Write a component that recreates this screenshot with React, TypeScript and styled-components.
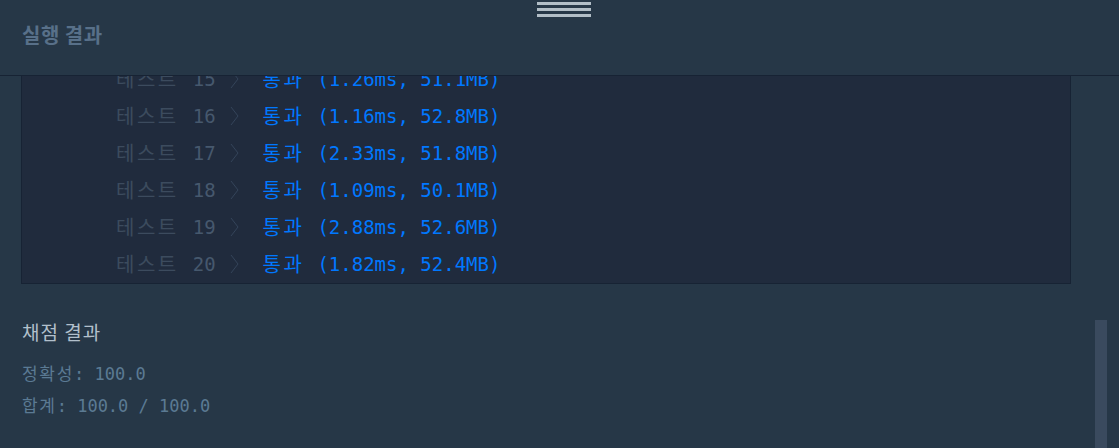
import React from "react";
import styled, { createGlobalStyle } from "styled-components";

const Global = createGlobalStyle`
  html, body { margin: 0; padding: 0; background: #263747; }
  body { font-family: "DejaVu Sans Mono", "Noto Sans CJK KR", monospace; }
`;

const Page = styled.div`
  position: relative;
  width: 1119px;
  height: 448px;
  overflow: hidden;
  background: #263747;
  display: flex;
  flex-direction: column;
`;

const Header = styled.header`
  position: relative;
  z-index: 2;
  flex: 0 0 auto;
  height: 76px;
  box-sizing: border-box;
  border-bottom: 1px solid #172334;
  background: #263747;
  display: flex;
  align-items: center;
  padding-left: 22px;
  padding-bottom: 6px;
`;

const Title = styled.h2`
  margin: 0;
  font-family: "Noto Sans CJK KR", sans-serif;
  font-weight: 700;
  font-size: 20px;
  color: #587089;
  letter-spacing: 0.5px;
`;

const Handle = styled.div`
  position: absolute;
  top: 2px;
  left: 537px;
  width: 54px;
  display: flex;
  flex-direction: column;
  gap: 3px;
`;

const HandleBar = styled.span`
  display: block;
  height: 3px;
  background: #b2bec7;
`;

const Body = styled.div`
  flex: 1 1 auto;
  overflow: hidden;
  padding: 0 48px 0 21px;
`;

const OutputBox = styled.div`
  margin-top: -17px;
  background: #202b3d;
  border: 1px solid #172334;
  padding-left: 94px;
  padding-bottom: 1px;
`;

const Row = styled.div`
  height: 37px;
  display: flex;
  align-items: center;
`;

const Label = styled.span`
  font-family: "Noto Sans CJK KR", sans-serif;
  font-size: 20px;
  letter-spacing: 2.5px;
  color: #3c4b5e;
`;

const Num = styled.span`
  margin-left: 14px;
  font-family: "DejaVu Sans Mono", monospace;
  font-size: 19px;
  color: #46586d;
`;

const Chevron = styled.svg`
  margin-left: 14px;
  flex: 0 0 auto;
`;

const Pass = styled.span`
  margin-left: 24px;
  font-family: "Noto Sans CJK KR", sans-serif;
  font-size: 20px;
  letter-spacing: 2.5px;
  color: #0078ff;
`;

const Detail = styled.span`
  margin-left: 13px;
  font-family: "DejaVu Sans Mono", monospace;
  font-size: 19px;
  color: #0078ff;
`;

const Summary = styled.section`
  padding-top: 35px;
  display: flex;
  flex-direction: column;
  padding-left: 1px;
`;

const SummaryTitle = styled.div`
  height: 26px;
  line-height: 26px;
  font-family: "Noto Sans CJK KR", sans-serif;
  font-size: 19px;
  color: #b2c0cc;
  letter-spacing: 1px;
  margin-bottom: 12px;
`;

const SummaryLine = styled.div`
  height: 32px;
  line-height: 32px;
  font-family: "DejaVu Sans Mono", "Noto Sans CJK KR", monospace;
  font-size: 17px;
  color: #5b7a93;
`;

const Ko = styled.span`
  font-family: "Noto Sans CJK KR", sans-serif;
  letter-spacing: 1.7px;
`;

const Thumb = styled.div`
  position: absolute;
  left: 1095px;
  top: 320px;
  width: 12px;
  bottom: 0;
  background: #3a4a5e;
`;

const rows = [
  { n: 15, d: "(1.26ms, 51.1MB)" },
  { n: 16, d: "(1.16ms, 52.8MB)" },
  { n: 17, d: "(2.33ms, 51.8MB)" },
  { n: 18, d: "(1.09ms, 50.1MB)" },
  { n: 19, d: "(2.88ms, 52.6MB)" },
  { n: 20, d: "(1.82ms, 52.4MB)" },
];

export default function App() {
  return (
    <Page>
      <Global />
      <Header>
        <Title>실행 결과</Title>
        <Handle>
          <HandleBar />
          <HandleBar />
          <HandleBar />
        </Handle>
      </Header>
      <Body>
        <OutputBox>
          {rows.map((r) => (
            <Row key={r.n}>
              <Label>테스트</Label>
              <Num>{r.n}</Num>
              <Chevron width="9" height="20" viewBox="0 0 9 20">
                <polyline points="1,1 8,10 1,19" fill="none" stroke="#34445a" strokeWidth="1" />
              </Chevron>
              <Pass>통과</Pass>
              <Detail>{r.d}</Detail>
            </Row>
          ))}
        </OutputBox>
        <Summary>
          <SummaryTitle>채점 결과</SummaryTitle>
          <SummaryLine>
            <Ko>정확성</Ko>: 100.0
          </SummaryLine>
          <SummaryLine>
            <Ko>합계</Ko>: 100.0 / 100.0
          </SummaryLine>
        </Summary>
      </Body>
      <Thumb />
    </Page>
  );
}
